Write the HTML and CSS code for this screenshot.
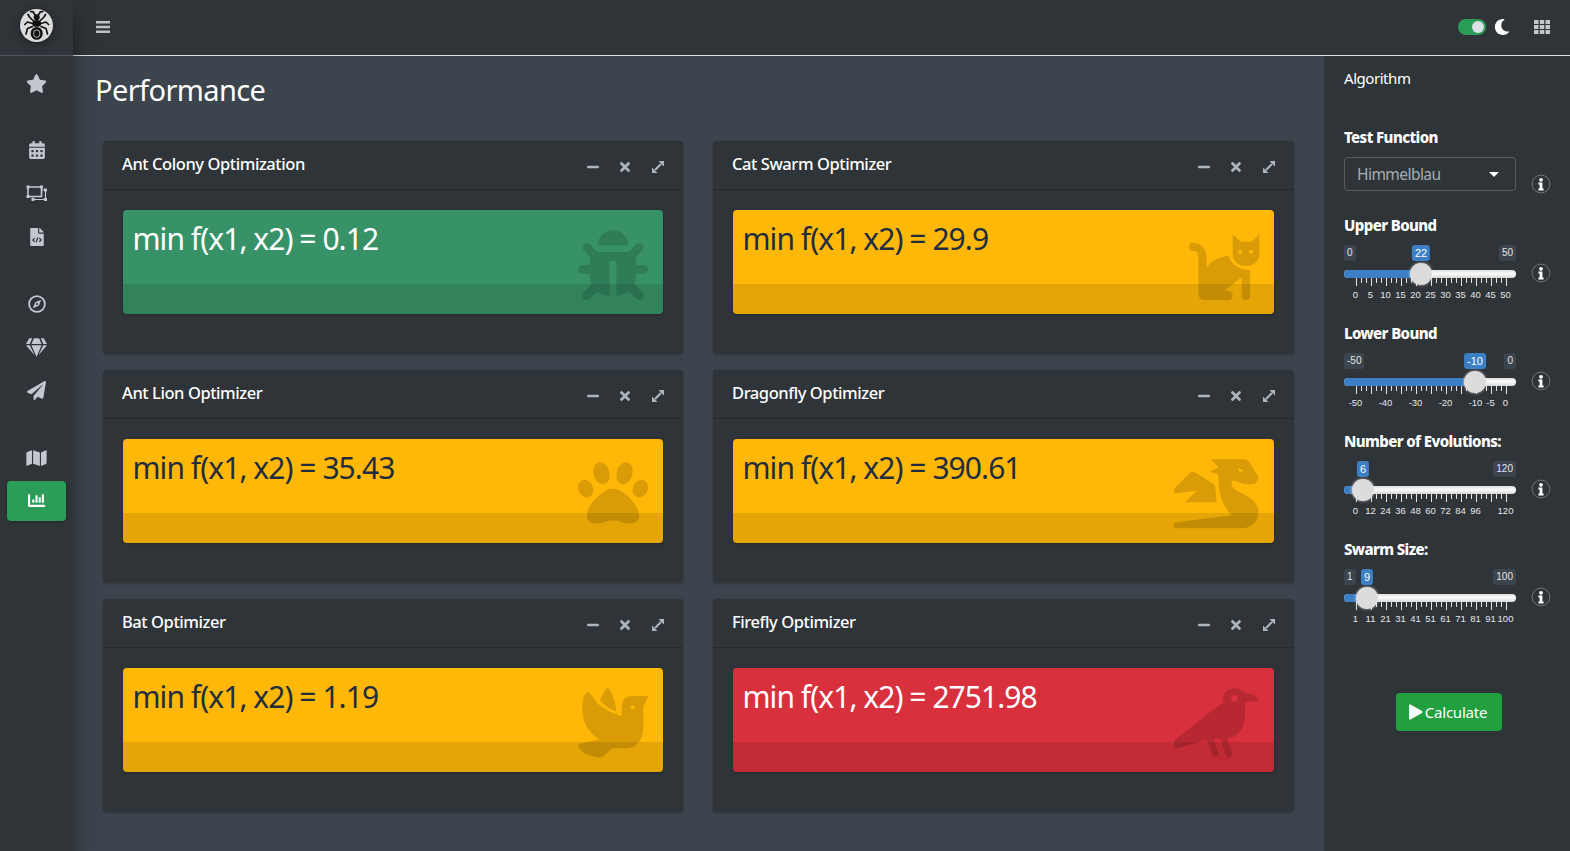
FILE: index.html
```html
<!DOCTYPE html>
<html lang="en">
<head>
  <meta charset="UTF-8" />
  <title>Performance</title>
  <link rel="stylesheet" href="styles.css">
</head>
<body>
  <svg class="defs" width="0" height="0">
    <symbol id="i-minus" viewBox="0 0 12 12"><rect x="0" y="4.8" width="12" height="2.4" rx="1"/></symbol>
    <symbol id="i-times" viewBox="-35 45 422 422"><path d="M242.72 256l100.07-100.07c12.28-12.28 12.28-32.19 0-44.48l-22.24-22.24c-12.28-12.28-32.19-12.28-44.48 0L176 189.28 75.93 89.21c-12.28-12.28-32.19-12.28-44.48 0L9.21 111.45c-12.28 12.28-12.28 32.19 0 44.48L109.28 256 9.21 356.07c-12.28 12.28-12.28 32.19 0 44.48l22.24 22.24c12.28 12.28 32.2 12.28 44.48 0L176 322.72l100.07 100.07c12.28 12.28 32.2 12.28 44.48 0l22.24-22.24c12.28-12.28 12.28-32.19 0-44.48L242.72 256z"/></symbol>
    <symbol id="i-expand" viewBox="0 0 12 12"><path d="M6.500 0H12v5.500zM0 12V6.500L5.500 12z"/><path d="M9 3L3 9" stroke="currentColor" stroke-width="2.200"/></symbol>
    <symbol id="i-info" viewBox="0 0 20 20"><circle cx="10" cy="10" r="8.9" fill="none" stroke="#6f757c" stroke-width="1"/><circle cx="10" cy="5.8" r="1.9" fill="#fff"/><path d="M7.4 8.6h4v6h1.2v1.8H7.4v-1.8h1.2v-4.2H7.4z" fill="#fff"/></symbol>
  </svg>

  <div class="app">
    <aside class="sidebar">
      <div class="brand">
        <svg class="brand-logo" viewBox="0 0 33 33">
          <circle cx="16.5" cy="16.5" r="16.5" fill="#dcdcdc"/>
          <g fill="#111">
            <circle cx="16.7" cy="8.2" r="3"/>
            <ellipse cx="16.7" cy="14.4" rx="4.4" ry="3.4"/>
            <ellipse cx="16.7" cy="24.4" rx="6" ry="6.4"/>
          </g>
          <ellipse cx="16.7" cy="24.6" rx="3.2" ry="3.8" fill="none" stroke="#dcdcdc" stroke-width=".8"/>
          <g fill="none" stroke="#111" stroke-width="1.7" stroke-linecap="round" stroke-linejoin="round">
            <path d="M15 6l-2-3.2-2.4-.3M18.4 6l2-3.2 2.4-.3"/>
            <path d="M13 11.5L9.5 8 8 5.5M20.4 11.5L24 8l1.5-2.5"/>
            <path d="M12.5 14.5L7.5 13 4.8 15.5M21 14.5L26 13l2.6 2.5"/>
            <path d="M12.5 17.5L7.5 19.5l-1.5 5.5M21 17.5l5 2 1.5 5.5"/>
          </g>
        </svg>
      </div>
      <nav class="side-nav">
        <div class="nav-group">
          <a class="nav-item"><svg width="21" height="19" viewBox="0 0 576 512"><path d="M259.3 17.8L194 150.2 47.9 171.5c-26.2 3.8-36.7 36.1-17.7 54.6l105.7 103-25 145.5c-4.5 26.3 23.2 46 46.4 33.7L288 439.6l130.7 68.7c23.2 12.2 50.9-7.4 46.4-33.7l-25-145.5 105.7-103c19-18.5 8.5-50.8-17.7-54.6L382 150.2 316.7 17.8c-11.7-23.6-45.6-24.1-57.4 0z"/></svg></a>
        </div>
        <div class="nav-group">
          <a class="nav-item"><svg width="16" height="18" viewBox="0 0 448 512"><path d="M0 464c0 26.5 21.5 48 48 48h352c26.5 0 48-21.5 48-48V192H0v272zm320-196c0-6.6 5.4-12 12-12h40c6.6 0 12 5.4 12 12v40c0 6.6-5.4 12-12 12h-40c-6.6 0-12-5.4-12-12v-40zm0 128c0-6.6 5.4-12 12-12h40c6.6 0 12 5.4 12 12v40c0 6.6-5.4 12-12 12h-40c-6.6 0-12-5.4-12-12v-40zM192 268c0-6.6 5.4-12 12-12h40c6.6 0 12 5.4 12 12v40c0 6.6-5.4 12-12 12h-40c-6.6 0-12-5.4-12-12v-40zm0 128c0-6.6 5.4-12 12-12h40c6.6 0 12 5.4 12 12v40c0 6.6-5.4 12-12 12h-40c-6.6 0-12-5.4-12-12v-40zM64 268c0-6.6 5.4-12 12-12h40c6.6 0 12 5.4 12 12v40c0 6.6-5.4 12-12 12H76c-6.6 0-12-5.4-12-12v-40zm0 128c0-6.6 5.4-12 12-12h40c6.6 0 12 5.4 12 12v40c0 6.6-5.4 12-12 12H76c-6.6 0-12-5.4-12-12v-40zM400 64h-48V16c0-8.8-7.2-16-16-16h-32c-8.8 0-16 7.2-16 16v48H160V16c0-8.8-7.2-16-16-16h-32c-8.8 0-16 7.2-16 16v48H48C21.5 64 0 85.5 0 112v48h448v-48c0-26.5-21.5-48-48-48z"/></svg></a>
          <a class="nav-item"><svg width="21" height="16" viewBox="0 0 21 16"><path d="M2 2h13.500v9.500H2z" fill="none" stroke="#c2c7d0" stroke-width="1.600"/><path d="M7 12.500v2h12.500V5H15.500" fill="none" stroke="#c2c7d0" stroke-width="1.200"/><path d="M.5.5h3v3h-3zM14 .5h3v3h-3zM.5 10h3v3h-3zM18 3.500h3v3h-3zM18 13h3v3h-3zM5.500 13h3v3h-3z"/></svg></a>
          <a class="nav-item"><svg width="14" height="18" viewBox="0 0 384 512"><path d="M384 121.941V128H256V0h6.059c6.365 0 12.47 2.529 16.971 7.029l97.941 97.941A24.005 24.005 0 0 1 384 121.941zM248 160c-13.2 0-24-10.8-24-24V0H24C10.745 0 0 10.745 0 24v464c0 13.255 10.745 24 24 24h336c13.255 0 24-10.745 24-24V160H248z"/><path d="M125 290l-50 50 50 50M259 290l50 50-50 50M215 270l-46 140" fill="none" stroke="#2f3439" stroke-width="34"/></svg></a>
        </div>
        <div class="nav-group">
          <a class="nav-item"><svg width="18" height="18" viewBox="0 0 18 18"><circle cx="9" cy="9" r="7.900" fill="none" stroke="#c2c7d0" stroke-width="1.800"/><path d="M13.200 4.800L10.800 10.800 4.800 13.200 7.200 7.200zM9 8a1 1 0 1 0 .01 0z" fill-rule="evenodd"/></svg></a>
          <a class="nav-item"><svg width="21" height="19" viewBox="0 0 576 512"><path d="M485.500 0L576 160H474.900L405.700 0h79.800zm-128 0l69.200 160H149.300L218.500 0h139zm-267 0h79.800l-69.200 160H0L90.500 0zM0 192h100.700l123 251.700c1.500 3.100-2.700 5.900-5 3.300L0 192zm148.200 0h279.600l-137 318.200c-1 2.400-4.500 2.400-5.500 0L148.200 192zm204.100 251.700l123-251.700H576L357.300 446.900c-2.300 2.700-6.500-.1-5-3.200z"/></svg></a>
          <a class="nav-item"><svg width="19" height="19" viewBox="0 0 512 512"><path d="M476 3.200L12.500 270.600c-18.100 10.400-15.800 35.600 2.200 43.200L121 358.400l287.300-253.200c5.500-4.900 13.300 2.600 8.600 8.300L176 407v80.500c0 23.600 28.500 32.900 42.500 15.800L282 426l124.600 52.200c14.200 6 30.400-2.900 33-18.200l72-432C515 7.800 493.300-6.800 476 3.200z"/></svg></a>
        </div>
        <div class="nav-group">
          <a class="nav-item"><svg width="21" height="18" viewBox="0 0 576 512"><path d="M0 117.660v346.320c0 11.320 11.430 19.060 21.940 14.860L160 416V32L20.120 87.950A32.006 32.006 0 0 0 0 117.660zM192 416l192 64V96L192 32v384zM554.060 33.160L416 96v384l139.880-55.950A31.996 31.996 0 0 0 576 394.340V48.020c0-11.320-11.430-19.060-21.940-14.860z"/></svg></a>
          <a class="nav-item active"><svg width="19" height="17" viewBox="0 0 512 512"><path d="M332.800 320h38.400c6.400 0 12.800-6.400 12.800-12.800V172.800c0-6.400-6.400-12.800-12.800-12.800h-38.400c-6.400 0-12.800 6.400-12.800 12.800v134.400c0 6.400 6.400 12.800 12.800 12.800zm96 0h38.400c6.400 0 12.800-6.400 12.800-12.800V76.800c0-6.400-6.400-12.800-12.800-12.800h-38.400c-6.400 0-12.800 6.400-12.800 12.800v230.400c0 6.400 6.400 12.800 12.800 12.800zm-288 0h38.400c6.400 0 12.800-6.400 12.800-12.800v-70.400c0-6.400-6.400-12.800-12.800-12.800h-38.400c-6.400 0-12.800 6.400-12.800 12.800v70.400c0 6.400 6.400 12.800 12.800 12.800zm96 0h38.400c6.400 0 12.800-6.400 12.800-12.800V108.800c0-6.400-6.400-12.800-12.800-12.800h-38.400c-6.400 0-12.800 6.400-12.800 12.800v198.400c0 6.400 6.400 12.800 12.800 12.800zM496 384H64V80c0-8.840-7.160-16-16-16H16C7.160 64 0 71.160 0 80v336c0 17.670 14.330 32 32 32h464c8.840 0 16-7.160 16-16v-32c0-8.840-7.160-16-16-16z"/></svg></a>
        </div>
      </nav>
    </aside>

    <div class="main">
      <header class="topbar">
        <svg class="burger" width="14" height="12" viewBox="0 0 14 12"><path d="M0 0h14v2.400H0zM0 4.800h14v2.400H0zM0 9.600h14V12H0z"/></svg>
        <div class="topbar-right">
          <span class="toggle"><span class="toggle-knob"></span></span>
          <svg class="moon" width="16" height="16" viewBox="0 0 512 512"><path d="M283.211 512c78.962 0 151.079-35.925 198.857-94.792 7.068-8.708-.639-21.43-11.562-19.35-124.203 23.654-238.262-71.576-238.262-196.954 0-72.222 38.662-138.635 101.498-174.394 9.686-5.512 7.25-20.197-3.756-22.23A258.156 258.156 0 0 0 283.211 0c-141.309 0-256 114.511-256 256 0 141.309 114.511 256 256 256z"/></svg>
          <svg class="apps" width="16" height="14" viewBox="0 0 16 14"><path d="M0 0h4.500v4H0zM5.750 0h4.500v4h-4.500zM11.500 0H16v4h-4.500zM0 5h4.500v4H0zM5.750 5h4.500v4h-4.500zM11.500 5H16v4h-4.500zM0 10h4.500v4H0zM5.750 10h4.500v4h-4.500zM11.500 10H16v4h-4.500z"/></svg>
        </div>
      </header>

      <div class="below">
        <main class="content">
          <h1 class="page-title">Performance</h1>
          <div class="card-grid">

            <section class="card">
              <div class="card-head">
                <h3 class="card-title">Ant Colony Optimization</h3>
                <div class="card-tools">
                  <svg class="tool"><use href="#i-minus"/></svg>
                  <svg class="tool"><use href="#i-times"/></svg>
                  <svg class="tool"><use href="#i-expand"/></svg>
                </div>
              </div>
              <div class="card-body">
                <div class="stat stat-green">
                  <p class="stat-value">min f(x1, x2) = 0.12</p>
                  <svg class="stat-icon" viewBox="0 0 512 512" style="width:70px;height:70px;right:15px;top:20px"><path d="M511.988 288.900c-.478 17.430-15.217 31.100-32.653 31.100H424v16c0 21.864-4.882 42.584-13.600 61.145l60.228 60.228c12.496 12.497 12.496 32.758 0 45.255-12.498 12.497-32.759 12.496-45.256 0l-54.736-54.736C345.886 467.965 314.351 480 280 480V236c0-6.627-5.373-12-12-12h-24c-6.627 0-12 5.373-12 12v244c-34.351 0-65.886-12.035-90.636-32.108l-54.736 54.736c-12.498 12.497-32.759 12.496-45.256 0-12.496-12.497-12.496-32.758 0-45.255l60.228-60.228C92.882 378.584 88 357.864 88 336v-16H32.666C15.230 320 .491 306.330.013 288.900-.484 270.816 14.028 256 32 256h56v-58.745l-46.628-46.628c-12.496-12.497-12.496-32.758 0-45.255 12.498-12.497 32.758-12.497 45.256 0L141.255 160h229.489l54.627-54.627c12.498-12.497 32.758-12.497 45.256 0 12.496 12.497 12.496 32.758 0 45.255L424 197.255V256h56c17.972 0 32.484 14.816 31.988 32.900zM257 0c-61.856 0-112 50.144-112 112h224C369 50.144 318.856 0 257 0z"/></svg>
                  <div class="stat-band"></div>
                </div>
              </div>
            </section>

            <section class="card">
              <div class="card-head">
                <h3 class="card-title">Cat Swarm Optimizer</h3>
                <div class="card-tools">
                  <svg class="tool"><use href="#i-minus"/></svg>
                  <svg class="tool"><use href="#i-times"/></svg>
                  <svg class="tool"><use href="#i-expand"/></svg>
                </div>
              </div>
              <div class="card-body">
                <div class="stat stat-yellow">
                  <p class="stat-value">min f(x1, x2) = 29.9</p>
                  <svg class="stat-icon" viewBox="72 210 300 312"><path fill-rule="evenodd" d="M128 308C150 308 170 325 170 350L170 383C185 360 210 350 235 347C245 375 270 390 300 390L300 468Q300 480 288 480Q275 480 275 468L275 412L222 452L235 452Q248 455 248 466Q248 480 235 480L165 480Q145 480 145 458L145 350Q145 333 128 333Q117 333 117 320Q117 308 128 308ZM248 283L272 305L304 305L328 283L328 345A40 33 0 0 1 248 345ZM270 329a6 6 0 1 0 .01 0zM303 329a6 6 0 1 0 .01 0z"/></svg>
                  <div class="stat-band"></div>
                </div>
              </div>
            </section>

            <section class="card">
              <div class="card-head">
                <h3 class="card-title">Ant Lion Optimizer</h3>
                <div class="card-tools">
                  <svg class="tool"><use href="#i-minus"/></svg>
                  <svg class="tool"><use href="#i-times"/></svg>
                  <svg class="tool"><use href="#i-expand"/></svg>
                </div>
              </div>
              <div class="card-body">
                <div class="stat stat-yellow">
                  <p class="stat-value">min f(x1, x2) = 35.43</p>
                  <svg class="stat-icon" viewBox="0 0 512 512" style="width:70px;height:70px;right:15px;top:19px"><path d="M256 224c-79.410 0-192 122.760-192 200.250 0 34.900 26.810 55.750 71.740 55.750 48.840 0 81.090-25.080 120.260-25.080 39.510 0 71.850 25.080 120.260 25.080 44.930 0 71.740-20.850 71.740-55.750C448 346.760 335.410 224 256 224zm-147.280-12.610c-10.400-34.650-42.440-57.090-71.560-50.130-29.120 6.960-44.290 40.690-33.890 75.340 10.400 34.650 42.440 57.090 71.560 50.130 29.120-6.960 44.290-40.690 33.890-75.340zm84.720-20.780c30.940-8.140 46.420-49.940 34.580-93.360s-46.520-72.010-77.460-63.870-46.420 49.940-34.580 93.360c11.840 43.420 46.510 72.020 77.460 63.870zm281.390-29.340c-29.120-6.960-61.150 15.480-71.560 50.130-10.400 34.650 4.770 68.380 33.890 75.340 29.120 6.960 61.150-15.480 71.560-50.130 10.400-34.650-4.770-68.380-33.890-75.340zm-156.270 29.340c30.940 8.140 65.620-20.450 77.460-63.870 11.840-43.420-3.640-85.210-34.580-93.360s-65.620 20.450-77.460 63.870c-11.840 43.420 3.640 85.220 34.580 93.360z"/></svg>
                  <div class="stat-band"></div>
                </div>
              </div>
            </section>

            <section class="card">
              <div class="card-head">
                <h3 class="card-title">Dragonfly Optimizer</h3>
                <div class="card-tools">
                  <svg class="tool"><use href="#i-minus"/></svg>
                  <svg class="tool"><use href="#i-times"/></svg>
                  <svg class="tool"><use href="#i-expand"/></svg>
                </div>
              </div>
              <div class="card-body">
                <div class="stat stat-yellow">
                  <p class="stat-value">min f(x1, x2) = 390.61</p>
                  <svg class="stat-icon" viewBox="72 27 300 312"><path fill-rule="evenodd" d="M182 88L285 88Q295 90 300 100L325 140Q325 163 300 163L285 163L255 152L245 152L245 165C250 190 325 195 325 245C325 280 300 295 270 295L75 295Q62 293 65 283Q70 278 80 277L245 256C225 235 205 200 205 150L205 133L180 125L205 112ZM263 113L283 123L268 125ZM65 183L120 128Q130 122 140 130L195 165L200 217L105 217L140 182L75 190Q62 190 65 183Z"/></svg>
                  <div class="stat-band"></div>
                </div>
              </div>
            </section>

            <section class="card">
              <div class="card-head">
                <h3 class="card-title">Bat Optimizer</h3>
                <div class="card-tools">
                  <svg class="tool"><use href="#i-minus"/></svg>
                  <svg class="tool"><use href="#i-times"/></svg>
                  <svg class="tool"><use href="#i-expand"/></svg>
                </div>
              </div>
              <div class="card-body">
                <div class="stat stat-yellow">
                  <p class="stat-value">min f(x1, x2) = 1.19</p>
                  <svg class="stat-icon" viewBox="39 24 300 312"><path fill-rule="evenodd" d="M113 96Q120 96 125 105C140 135 170 155 215 168L215 135Q218 110 245 108L295 108L280 140L280 200C280 240 260 265 225 265L185 265L165 285Q155 295 140 292Q100 285 85 260Q85 252 95 250L148 238C110 215 95 180 97 135Q100 100 113 96ZM248 136a6 6 0 1 0 .01 0zM150 120L165 90Q175 78 180 90Q195 120 200 155Q170 145 150 120Z"/></svg>
                  <div class="stat-band"></div>
                </div>
              </div>
            </section>

            <section class="card">
              <div class="card-head">
                <h3 class="card-title">Firefly Optimizer</h3>
                <div class="card-tools">
                  <svg class="tool"><use href="#i-minus"/></svg>
                  <svg class="tool"><use href="#i-times"/></svg>
                  <svg class="tool"><use href="#i-expand"/></svg>
                </div>
              </div>
              <div class="card-body">
                <div class="stat stat-red">
                  <p class="stat-value">min f(x1, x2) = 2751.98</p>
                  <svg class="stat-icon" viewBox="72 24 300 312"><path fill-rule="evenodd" d="M253 85C270 85 278 93 282 97L305 102Q325 110 325 122L285 127L285 165C285 205 265 232 232 236L247 282Q247 290 235 293Q230 292 227 285L212 238L192 238L207 282Q207 290 195 292Q190 291 187 285L170 240L80 265Q65 268 63 255Q63 248 70 243L220 125Q215 105 225 98Q235 85 253 85ZM253 105a10 10 0 1 0 .01 0z"/></svg>
                  <div class="stat-band"></div>
                </div>
              </div>
            </section>

          </div>
        </main>

        <aside class="control">
          <div class="control-title">Algorithm</div>

          <div class="field field-select">
            <div class="field-main">
              <label class="field-label">Test Function</label>
              <div class="select">Himmelblau<span class="caret"></span></div>
            </div>
            <svg class="info"><use href="#i-info"/></svg>
          </div>

          <div class="field">
            <div class="field-main">
              <label class="field-label">Upper Bound</label>
              <div class="slider">
                <span class="tag tag-min">0</span>
                <span class="tag tag-max">50</span>
                <span class="tag tag-from" style="left:77px">22</span>
                <div class="track"><div class="track-fill" style="width:77px"></div><span class="thumb" style="left:77px"></span></div>
                <div class="ticks"></div>
                <div class="tick-labels">
                  <span style="left:0%">0</span><span style="left:10%">5</span><span style="left:20%">10</span><span style="left:30%">15</span><span style="left:40%">20</span><span style="left:50%">25</span><span style="left:60%">30</span><span style="left:70%">35</span><span style="left:80%">40</span><span style="left:90%">45</span><span style="left:100%">50</span>
                </div>
              </div>
            </div>
            <svg class="info"><use href="#i-info"/></svg>
          </div>

          <div class="field">
            <div class="field-main">
              <label class="field-label">Lower Bound</label>
              <div class="slider">
                <span class="tag tag-min">-50</span>
                <span class="tag tag-max">0</span>
                <span class="tag tag-from" style="left:131px">-10</span>
                <div class="track"><div class="track-fill" style="width:131px"></div><span class="thumb" style="left:131px"></span></div>
                <div class="ticks"></div>
                <div class="tick-labels">
                  <span style="left:0%">-50</span><span style="left:20%">-40</span><span style="left:40%">-30</span><span style="left:60%">-20</span><span style="left:80%">-10</span><span style="left:90%">-5</span><span style="left:100%">0</span>
                </div>
              </div>
            </div>
            <svg class="info"><use href="#i-info"/></svg>
          </div>

          <div class="field">
            <div class="field-main">
              <label class="field-label">Number of Evolutions:</label>
              <div class="slider">
                <span class="tag tag-max">120</span>
                <span class="tag tag-from" style="left:19px">6</span>
                <div class="track"><div class="track-fill" style="width:19px"></div><span class="thumb" style="left:19px"></span></div>
                <div class="ticks"></div>
                <div class="tick-labels">
                  <span style="left:0%">0</span><span style="left:10%">12</span><span style="left:20%">24</span><span style="left:30%">36</span><span style="left:40%">48</span><span style="left:50%">60</span><span style="left:60%">72</span><span style="left:70%">84</span><span style="left:80%">96</span><span style="left:100%">120</span>
                </div>
              </div>
            </div>
            <svg class="info"><use href="#i-info"/></svg>
          </div>

          <div class="field">
            <div class="field-main">
              <label class="field-label">Swarm Size:</label>
              <div class="slider">
                <span class="tag tag-min">1</span>
                <span class="tag tag-max">100</span>
                <span class="tag tag-from" style="left:23px">9</span>
                <div class="track"><div class="track-fill" style="width:23px"></div><span class="thumb" style="left:23px"></span></div>
                <div class="ticks"></div>
                <div class="tick-labels">
                  <span style="left:0%">1</span><span style="left:10%">11</span><span style="left:20%">21</span><span style="left:30%">31</span><span style="left:40%">41</span><span style="left:50%">51</span><span style="left:60%">61</span><span style="left:70%">71</span><span style="left:80%">81</span><span style="left:90%">91</span><span style="left:100%">100</span>
                </div>
              </div>
            </div>
            <svg class="info"><use href="#i-info"/></svg>
          </div>

          <button class="calc-btn">
            <svg width="15" height="16" viewBox="0 0 15 16"><path d="M1 1.500Q1 0 2.500.6L14 7q1 1 0 2L2.500 15.400Q1 16 1 14.500z"/></svg>
            Calculate
          </button>
        </aside>
      </div>
    </div>
  </div>
</body>
</html>
```
FILE: styles.css
```css
:root {
  --panel: #2f3439;
  --content: #3c444d;
  --icon: #c2c7d0;
  --green: #2c9d58;
  --blue: #3c7fc4;
  --ui-font: "Noto Sans", "Open Sans", sans-serif;
}

* { box-sizing: border-box; }

html, body {
  margin: 0;
  padding: 0;
  height: 100%;
  overflow: hidden;
  font-family: var(--ui-font);
  background: var(--panel);
  color: #fff;
}

.defs { position: absolute; }

.app {
  display: flex;
  height: 851px;
}

/* left rail */
.sidebar {
  width: 73px;
  flex: none;
  background: var(--panel);
  box-shadow: 0 14px 28px rgba(0,0,0,.25), 0 10px 10px rgba(0,0,0,.22);
  z-index: 2;
}

.brand {
  height: 56px;
  display: flex;
  align-items: center;
  justify-content: center;
  border-bottom: 1px solid #4b545c;
  padding-bottom: 5px;
}

.brand-logo {
  width: 33px;
  height: 33px;
  filter: drop-shadow(0 2px 4px rgba(0,0,0,.4));
}

.side-nav { padding: 7px 7px 0; }

.nav-group { padding-bottom: 23.6px; }

.nav-item {
  display: flex;
  align-items: center;
  justify-content: center;
  height: 40px;
  margin-bottom: 3.4px;
  border-radius: 4px;
  fill: var(--icon);
}

.nav-item.active {
  background: var(--green);
  fill: #fff;
  box-shadow: 0 1px 3px rgba(0,0,0,.25);
}

/* top bar */
.main {
  flex: 1;
  min-width: 0;
  display: flex;
  flex-direction: column;
}

.topbar {
  height: 56px;
  flex: none;
  display: flex;
  align-items: center;
  justify-content: space-between;
  background: var(--panel);
  border-bottom: 1px solid #dee2e6;
  padding: 0 20px 2px 23px;
}

.burger { fill: #bfc3c7; }

.topbar-right {
  display: flex;
  align-items: center;
}

.toggle {
  width: 28px;
  height: 16px;
  border-radius: 8px;
  background: var(--green);
  display: flex;
  justify-content: flex-end;
  align-items: center;
  padding-right: 2px;
}

.toggle-knob {
  width: 12px;
  height: 12px;
  border-radius: 50%;
  background: #dce0e4;
}

.moon { fill: #fff; margin-left: 8px; }
.apps { fill: #c4c6c9; margin-left: 24px; }

/* main content */
.below {
  flex: 1;
  display: flex;
  min-height: 0;
}

.content {
  flex: 1;
  min-width: 0;
  background: var(--content);
  padding: 0 30px;
}

.page-title {
  height: 85px;
  margin: 0 0 0 -8px;
  padding-top: 12px;
  font-size: 29px;
  font-weight: 400;
  line-height: 43px;
  letter-spacing: -.6px;
}

.card-grid {
  display: grid;
  grid-template-columns: 580px 581px;
  column-gap: 30px;
  row-gap: 16px;
}

.card {
  height: 213px;
  background: var(--panel);
  border-radius: 4px;
  box-shadow: 0 0 1px rgba(0,0,0,.13), 0 1px 3px rgba(0,0,0,.2);
}

.card-head {
  height: 49px;
  display: flex;
  align-items: center;
  justify-content: space-between;
  padding: 0 9px 2px 19px;
  border-bottom: 1px solid rgba(0,0,0,.2);
}

.card-title {
  margin: 0 0 1px;
  font-size: 16.5px;
  font-weight: 500;
  letter-spacing: -.43px;
}

.card-tools {
  display: flex;
  align-items: center;
  margin-top: 6px;
  fill: #adb5bd;
  color: #adb5bd;
}

.tool {
  width: 12px;
  height: 12px;
  margin: 0 10.2px;
}

.card-body { padding: 20px 20px 0; }

.stat {
  position: relative;
  height: 104px;
  border-radius: 4px;
  overflow: hidden;
  box-shadow: 0 0 1px rgba(0,0,0,.13), 0 1px 3px rgba(0,0,0,.2);
}

.stat-green { background: #389267; color: #fff; }
.stat-yellow { background: #ffb808; color: #1f2d3d; }
.stat-red { background: #d9303d; color: #fff; }

.stat-value {
  margin: 0;
  padding: 7px 10px 0 9.5px;
  font-size: 30px;
  line-height: 44px;
  letter-spacing: -.95px;
  white-space: nowrap;
}

.stat-icon {
  position: absolute;
  right: 0;
  top: 0;
  width: 100px;
  height: 104px;
  fill: rgba(0,0,0,.15);
}

.stat-band {
  position: absolute;
  left: 0;
  right: 0;
  bottom: 0;
  height: 30px;
  background: rgba(0,0,0,.1);
}

/* right panel */
.control {
  width: 246px;
  flex: none;
  background: var(--panel);
  padding: 0 20px;
  position: relative;
}

.control-title {
  font-size: 15px;
  line-height: 22px;
  height: 43px;
  padding-top: 11px;
  letter-spacing: -.45px;
}

.field {
  display: flex;
  align-items: flex-end;
  height: 108px;
}

.field-select { height: 100px; padding-bottom: 8px; }

.field-main {
  width: 172px;
  flex: none;
}

.field-label {
  display: block;
  font-size: 15px;
  font-weight: 800;
  line-height: 22px;
  letter-spacing: -.6px;
  margin-bottom: 9px;
}

.select {
  height: 34px;
  border: 1px solid #585e65;
  border-radius: 4px;
  padding: 0 12px;
  display: flex;
  align-items: center;
  justify-content: space-between;
  color: #a7acb1;
  font-size: 15.5px;
  letter-spacing: -.55px;
}

.caret {
  width: 0;
  height: 0;
  border-left: 5px solid transparent;
  border-right: 5px solid transparent;
  border-top: 5px solid #fff;
  margin-right: 4px;
}

.info {
  width: 20px;
  height: 20px;
  margin-left: 15px;
  flex: none;
}

.field .info { margin-bottom: 24px; }
.field-select .info { margin-bottom: -3px; }

.slider {
  position: relative;
  width: 172px;
  height: 62px;
  font-family: "Liberation Sans", Arial, sans-serif;
  font-size: 10px;
  padding-top: 25px;
}

.tag {
  position: absolute;
  top: 0;
  height: 16px;
  line-height: 16px;
  padding: 0 3px;
  border-radius: 3px;
  background: #3c444d;
  color: #e4e6e8;
}

.tag-min { left: 0; }
.tag-max { right: 0; }
.tag-from {
  background: var(--blue);
  color: #fff;
  transform: translateX(-50%);
  font-size: 11px;
}

.track {
  position: relative;
  height: 8px;
  border-radius: 4px;
  background: linear-gradient(#dedede, #fafafa 45%, #d8d8d8);
}

.track-fill {
  height: 100%;
  background: var(--blue);
  border-radius: 4px 0 0 4px;
}

.thumb {
  position: absolute;
  top: -7px;
  width: 22px;
  height: 22px;
  margin-left: -11px;
  border-radius: 50%;
  background: #dcdcdc;
  box-shadow: 0 0 3px rgba(255,255,255,.7);
}

.ticks {
  width: 151px;
  height: 8px;
  margin-left: 11.5px;
  background-image:
    repeating-linear-gradient(to right, #e4e4e4 0 1px, transparent 1px 15px),
    repeating-linear-gradient(to right, #e4e4e4 0 1px, transparent 1px 5px);
  background-size: 100% 8px, 100% 5px;
  background-repeat: no-repeat;
}

.tick-labels {
  position: relative;
  width: 150px;
  height: 12px;
  margin: 3px 0 0 11.5px;
  line-height: 12px;
  color: #e4e6e8;
  font-size: 9.5px;
}

.tick-labels span {
  position: absolute;
  top: 0;
  transform: translateX(-50%);
}

.calc-btn {
  position: absolute;
  left: 72px;
  top: 637px;
  width: 106px;
  height: 38px;
  border: none;
  border-radius: 4px;
  padding: 0 3px 0 0;
  background: #229f3f;
  color: #fff;
  font-family: var(--ui-font);
  font-size: 15px;
  letter-spacing: -.22px;
  display: flex;
  align-items: center;
  justify-content: center;
  gap: 2px;
  fill: #fff;
}
```
